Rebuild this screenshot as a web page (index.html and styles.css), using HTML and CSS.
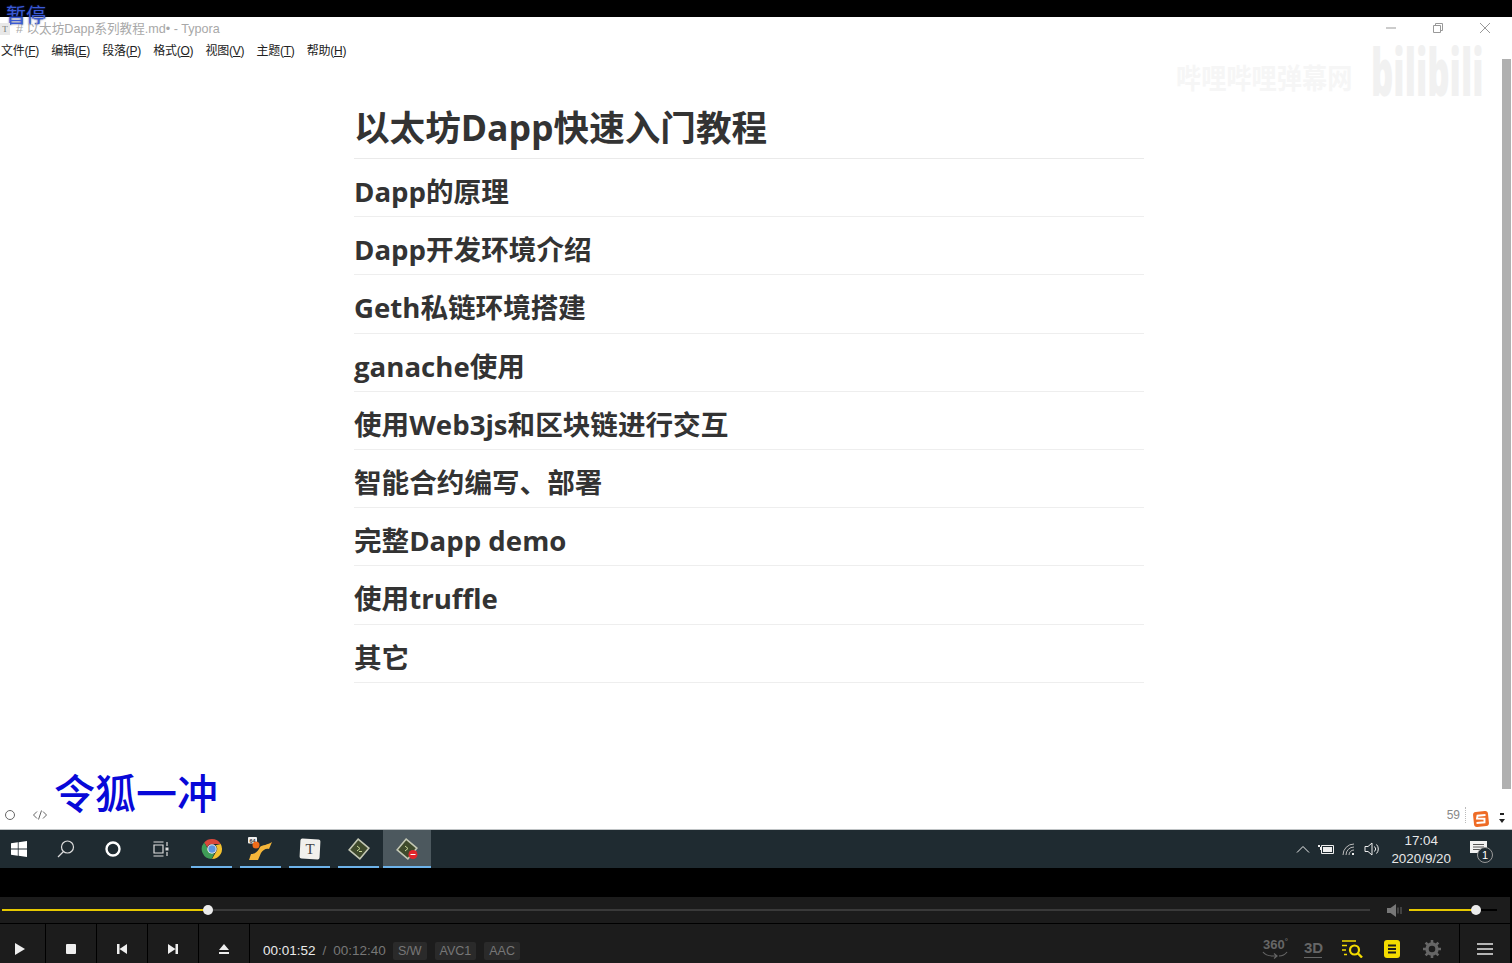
FILE: index.html
```html
<!DOCTYPE html>
<html lang="zh">
<head>
<meta charset="utf-8">
<title>Typora</title>
<link rel="stylesheet" href="styles.css">
</head>
<body>
<div class="screen">
  <div class="topblack"></div>
  <div class="pause">暂停</div>
  <main class="app">
    <header class="titlebar">
      <span class="appicon">T</span>
      <span class="title"># 以太坊Dapp系列教程.md• - Typora</span>
      <div class="winctl">
        <svg width="12" height="12" viewBox="0 0 12 12"><path d="M1 6h10" stroke="#999" fill="none"/></svg>
        <svg width="12" height="12" viewBox="0 0 12 12"><path d="M1.500 3.500h7v7h-7zM3.500 3.500v-2h7v7h-2" stroke="#999" fill="none"/></svg>
        <svg width="12" height="12" viewBox="0 0 12 12"><path d="M1 1l10 10M11 1L1 11" stroke="#999" fill="none"/></svg>
      </div>
    </header>
    <nav class="menubar">
      <span>文件(<u>F</u>)</span><span>编辑(<u>E</u>)</span><span>段落(<u>P</u>)</span><span>格式(<u>O</u>)</span><span>视图(<u>V</u>)</span><span>主题(<u>T</u>)</span><span>帮助(<u>H</u>)</span>
    </nav>
    <div class="docwrap">
      <article class="doc">
        <h1>以太坊Dapp快速入门教程</h1>
        <h2>Dapp的原理</h2>
        <h2>Dapp开发环境介绍</h2>
        <h2>Geth私链环境搭建</h2>
        <h2>ganache使用</h2>
        <h2>使用Web3js和区块链进行交互</h2>
        <h2>智能合约编写、部署</h2>
        <h2>完整Dapp demo</h2>
        <h2>使用truffle</h2>
        <h2>其它</h2>
      </article>
      <div class="scrollbar"><div class="thumb"></div></div>
    </div>
    <footer class="status">
      <svg class="st-circle" width="12" height="12" viewBox="0 0 12 12"><circle cx="6" cy="6" r="4.500" stroke="#666" fill="none"/></svg>
      <svg class="st-code" width="16" height="12" viewBox="0 0 16 12"><path d="M5 2.500L1.500 6 5 9.500M11 2.500L14.500 6 11 9.500M9.500 1.500L6.500 10.500" stroke="#666" fill="none"/></svg>
      <span class="count">59</span>
      <span class="dots"></span>
      <svg class="sogou" width="18" height="18" viewBox="0 0 18 18"><rect x="1.500" y="1.500" width="15" height="15" rx="3" transform="rotate(-6 9 9)" fill="#ee6b25"/><path d="M13.500 5L5.500 5.700 5 8.500 12.500 8.700 12.500 12.300 4.500 13" stroke="#fff" stroke-width="1.900" fill="none"/></svg>
      <svg class="imedots" width="6" height="12" viewBox="0 0 6 12"><path d="M1 1h4v2H1zM0 7h6L3 11z" fill="#222"/></svg>
    </footer>
  </main>
  <div class="wm-name">令狐一冲</div>
  <div class="wm-bili-text">哔哩哔哩弹幕网</div>
  <div class="wm-bili">bilibili</div>

  <div class="taskbar">
    <svg class="tb-start" width="16" height="16" viewBox="0 0 16 16"><path d="M0 2.300l6.800-1v6.200H0zM7.600 1.200L16 0v7.500H7.600zM0 8.400h6.800v6.300L0 13.700zM7.600 8.400H16V16l-8.400-1.200z" fill="#fff"/></svg>
    <svg class="tb-search" width="20" height="20" viewBox="0 0 20 20"><circle cx="11.500" cy="8" r="6" stroke="#ddd" stroke-width="1.200" fill="none"/><path d="M7.500 12.500L2 18" stroke="#ddd" stroke-width="1.200"/></svg>
    <svg class="tb-cortana" width="18" height="18" viewBox="0 0 18 18"><circle cx="9" cy="9" r="6.500" stroke="#fff" stroke-width="2.400" fill="none"/></svg>
    <svg class="tb-tasks" width="18" height="16" viewBox="0 0 18 16"><path d="M1.500 1h10M1.500 15h10M2 4h9v8H2zM15 1v4M15 11v4" stroke="#ddd" stroke-width="1.200" fill="none"/><path d="M13.500 6.500h3v3h-3z" fill="#ddd"/></svg>
    <div class="tb-apps">
      <div class="tb-app">
        <svg width="22" height="22" viewBox="0 0 24 24"><path d="M12 1a11 11 0 0 1 9.500 5.500H12a5.500 5.500 0 0 0-5.200 3.700L3.500 4.800A11 11 0 0 1 12 1z" fill="#d9483b"/><path d="M21.500 6.500A11 11 0 0 1 12 23l4.700-8.200A5.500 5.500 0 0 0 16 8z" fill="#f3c22f"/><path d="M3.500 4.800L8.200 13a5.500 5.500 0 0 0 6.500 3.500L11.500 23A11 11 0 0 1 3.500 4.800z" fill="#3f9d57"/><circle cx="12" cy="12" r="5.200" fill="#eee"/><circle cx="12" cy="12" r="4" fill="#5a95e0"/></svg>
      </div>
      <div class="tb-app">
        <svg width="25" height="24" viewBox="0 0 25 24"><rect x="0" y="0" width="9" height="6.500" rx="1" fill="#eee"/><text x="4.500" y="5.500" text-anchor="middle" class="mini64">64</text><circle cx="8" cy="8" r="3.500" fill="#ef6c1a"/><path d="M24 5L21 12C18 11 15 13 13 16L10 23 1 23 3 17C8 17 10 14 12 10 14 8 20 8 24 5z" fill="#f4b63a"/></svg>
      </div>
      <div class="tb-app">
        <svg width="22" height="22" viewBox="0 0 22 22"><rect x="1" y="1" width="20" height="20" rx="2" transform="rotate(3 11 11)" fill="#f1f0ec"/><text x="11" y="16" text-anchor="middle" class="typora-t">T</text></svg>
      </div>
      <div class="tb-app">
        <svg width="24" height="24" viewBox="0 0 24 24"><rect x="5" y="5" width="14" height="14" transform="rotate(40 12 12)" fill="#3f4a2c" stroke="#c3c7b4" stroke-width="1.600"/><path d="M10 9l3 2.500-3 2.500M12 14.500h3" stroke="#c8d79a" fill="none"/></svg>
      </div>
      <div class="tb-app active">
        <svg width="24" height="24" viewBox="0 0 24 24"><rect x="5" y="5" width="14" height="14" transform="rotate(40 12 12)" fill="#3f4a2c" stroke="#c3c7b4" stroke-width="1.600"/><path d="M10 9l3 2.500-3 2.500" stroke="#c8d79a" fill="none"/><circle cx="18" cy="17.500" r="4.500" fill="#e2262b"/><path d="M15.500 17.500h5" stroke="#fff"/></svg>
      </div>
    </div>
    <div class="tray">
      <svg width="14" height="8" viewBox="0 0 14 8"><path d="M1 7.500l6-6 6 6" stroke="#eee" fill="none"/></svg>
      <svg width="16" height="10" viewBox="0 0 16 10"><path d="M3.500 1.500h12v8h-12z" stroke="#eee" fill="none"/><path d="M5 3h9v5H5zM0 1h2v2H0zM2 3h1v3H2z" fill="#eee"/></svg>
      <svg width="14" height="14" viewBox="0 0 14 14"><path d="M1 13A11 11 0 0 1 12 2M4 13A8 8 0 0 1 12 5M7 13A5 5 0 0 1 12 8" stroke="#bbb" fill="none"/><path d="M10 11h2v2h-2z" fill="#eee"/></svg>
      <svg width="17" height="14" viewBox="0 0 17 14"><path d="M1 4.500h3L8 1v12L4 9.500H1zM10.500 4.500a3.500 3.500 0 0 1 0 5M12.500 2.500a6.500 6.500 0 0 1 0 9" stroke="#eee" fill="none"/></svg>
      <div class="clock"><span>17:04</span><span>2020/9/20</span></div>
      <div class="notify">
        <svg width="18" height="16" viewBox="0 0 18 16"><path d="M0 0h17v12H0z" fill="#f2f2f2"/><path d="M3 3.500h11M3 6h11M3 8.500h7" stroke="#555"/></svg>
        <span class="badge">1</span>
      </div>
    </div>
  </div>
  <div class="blackgap"></div>
  <section class="player">
    <div class="seekrow">
      <div class="seek"><div class="seek-done"></div><div class="knob"></div></div>
      <div class="volume">
        <svg width="15" height="13" viewBox="0 0 15 13"><path d="M0 4h3.500L9 0v13L3.500 9H0z" fill="#777"/><path d="M11 3.500v6M14 3v7" stroke="#666"/></svg>
        <div class="volbar"><div class="vol-done"></div><div class="knob"></div></div>
      </div>
    </div>
    <div class="ctrlrow">
      <button class="btn first"><svg width="12" height="14" viewBox="0 0 12 14"><path d="M1 1l10 6-10 6z" fill="#eee"/></svg></button>
      <button class="btn"><svg width="12" height="12" viewBox="0 0 12 12"><rect x="1" y="1" width="10" height="10" rx="1" fill="#eee"/></svg></button>
      <button class="btn"><svg width="12" height="12" viewBox="0 0 12 12"><path d="M1 1h2.500v10H1zM11 1v10L3.500 6z" fill="#eee"/></svg></button>
      <button class="btn"><svg width="12" height="12" viewBox="0 0 12 12"><path d="M11 1h-2.500v10H11zM1 1v10l7.500-5z" fill="#eee"/></svg></button>
      <button class="btn"><svg width="12" height="12" viewBox="0 0 12 12"><path d="M6 1l5 6H1zM1 9h10v2H1z" fill="#eee"/></svg></button>
      <div class="times">
        <span class="t-now">00:01:52</span><span class="t-sep">/</span><span class="t-all">00:12:40</span>
        <span class="tag">S/W</span><span class="tag">AVC1</span><span class="tag">AAC</span>
      </div>
      <div class="tools">
        <div class="i360"><span>360<sup>°</sup></span><svg width="26" height="8" viewBox="0 0 26 8"><path d="M1 1q3 4 10 4M25 1q-3 4-8 4M9 5h6M12 2.500L15 5l-3 2.500" stroke="#666" stroke-width="1.200" fill="none"/></svg></div>
        <div class="i3d">3D</div>
        <svg class="i-search" width="22" height="18" viewBox="0 0 22 18"><path d="M1 1h14M1 5.500h5M1 10h4M3 14.500h3" stroke="#f4dc00" stroke-width="1.400" fill="none"/><circle cx="13.500" cy="10" r="4.500" stroke="#f4dc00" stroke-width="2.200" fill="none"/><path d="M17 13.500l4 4" stroke="#f4dc00" stroke-width="2.400"/></svg>
        <svg class="i-note" width="16" height="18" viewBox="0 0 16 18"><rect width="16" height="18" rx="3" fill="#f4dc00"/><path d="M4 5.500h8M4 9h8M4 12.500h8" stroke="#1c1c1c" stroke-width="1.800"/></svg>
        <svg class="i-gear" width="18" height="18" viewBox="0 0 18 18"><circle cx="9" cy="9" r="5" stroke="#666" stroke-width="3.400" fill="none"/><path d="M9 0v4M9 14v4M0 9h4M14 9h4M2.600 2.600l2.800 2.800M12.600 12.600l2.800 2.800M15.400 2.600l-2.800 2.800M5.400 12.600l-2.800 2.800" stroke="#666" stroke-width="2.600"/></svg>
        <div class="menubtn"><svg width="16" height="12" viewBox="0 0 16 12"><path d="M0 1h16M0 6h16M0 11h16" stroke="#e6e6e6" stroke-width="1.400"/></svg></div>
      </div>
    </div>
  </section>
</div>
</body>
</html>
```

FILE: styles.css
```css
* { box-sizing: border-box; }
html, body { margin: 0; padding: 0; background: #000; }
body { font-family: "Liberation Sans", "Noto Sans CJK SC", sans-serif; overflow: hidden; }
.screen { position: relative; width: 1512px; height: 963px; display: flex; flex-direction: column; overflow: hidden; background: #000; }
.topblack { height: 17px; flex: none; background: #000; }
.pause { position: absolute; left: 6px; top: 2px; font-size: 20px; line-height: 26px; color: #3a5ad6; font-family: "Noto Sans CJK SC", sans-serif; text-shadow: 0 0 2px #14236e; }

.app { height: 812px; flex: none; background: #fff; display: flex; flex-direction: column; }
.titlebar { height: 23px; flex: none; display: flex; align-items: center; color: #a8a8a8; font-size: 12.6px; position: relative; padding-top: 1px; }
.appicon { width: 10px; height: 12px; margin-right: 6px; background: #e8e8e8; color: #777; font-size: 9px; line-height: 12px; text-align: center; font-family: "Liberation Serif", serif; }
.title { line-height: 23px; white-space: nowrap; }
.winctl { margin-left: auto; display: flex; gap: 35px; padding-right: 21px; align-items: center; margin-top: -2px; }
.menubar { height: 21px; flex: none; display: flex; gap: 12.200px; align-items: flex-start; font-size: 12px; line-height: 16px; padding-top: 3px; color: #222; padding-left: 1px; letter-spacing: -0.25px; }
.menubar span { white-space: nowrap; }
.docwrap { flex: 1; min-height: 0; display: flex; position: relative; }
.doc { width: 790px; margin-left: 354px; padding-top: 39px; color: #333; font-family: "Open Sans", "Noto Sans CJK SC", sans-serif; font-weight: 700; }
h1 { margin: 0; font-size: 35.6px; line-height: 48px; height: 59px; padding-top: 3px; border-bottom: 1px solid #eaeaea; white-space: nowrap; font-weight: 700; }
h2 { margin: 0; font-size: 27.6px; line-height: 38px; height: 58.2px; padding-top: 13px; border-bottom: 1px solid #eee; white-space: nowrap; font-weight: 700; }
.scrollbar { position: absolute; right: 0; top: 0; bottom: 0; width: 10px; display: flex; justify-content: flex-start; }
.thumb { width: 9px; margin-top: -2px; height: 730px; background: #b0b0b0; }
.status { height: 29px; flex: none; display: flex; align-items: center; padding-left: 4px; color: #888; font-size: 12px; background: #fff; }
.st-code { margin-left: 16px; }
.count { margin-left: auto; margin-right: 5px; }
.dots { height: 16px; width: 0; border-left: 1px dotted #bbb; margin-right: 7px; }
.sogou { margin-right: 9px; margin-top: 8px; margin-left: -1px; }
.imedots { margin-right: 7px; margin-top: 7px; }
.wm-name { position: absolute; left: 54px; top: 764px; font-size: 41px; line-height: 54px; color: #0808d8; white-space: nowrap; font-family: "Noto Sans CJK SC", sans-serif; font-weight: 500; }
.wm-bili-text { position: absolute; left: 1176px; top: 61px; font-size: 28px; line-height: 32px; color: #f6f6f6; white-space: nowrap; font-family: "Noto Sans CJK SC", sans-serif; font-weight: 700; transform: scaleX(0.9); transform-origin: 0 0; }
.wm-bili { position: absolute; left: 1371px; top: 30px; font-size: 66px; line-height: 80px; color: #f1f1f1; white-space: nowrap; font-family: "Open Sans", sans-serif; font-weight: 800; transform: scaleX(0.527); transform-origin: 0 0; }

.taskbar { height: 39px; flex: none; background: #1f2b31; border-top: 1px solid #bfc3c5; display: flex; align-items: center; color: #eee; position: relative; }
.tb-start { margin-left: 11px; }
.tb-search { margin-left: 29px; }
.tb-cortana { margin-left: 28px; }
.tb-tasks { margin-left: 30px; }
.tb-apps { display: flex; margin-left: 21px; height: 100%; gap: 8px; }
.tb-app { width: 41px; flex: none; height: 100%; display: flex; align-items: center; justify-content: center; border-bottom: 2px solid #6db3ea; padding-top: 1px; }
.tb-app.active { width: 48px; background: #4c585e; margin-left: -4px; }
.typora-t { font-family: "Liberation Serif", serif; font-size: 15px; fill: #444; }
.mini64 { font-family: "Liberation Sans", sans-serif; font-size: 5.500px; font-weight: 700; fill: #333; }
.tray { margin-left: auto; display: flex; align-items: center; height: 100%; gap: 8px; padding-right: 24px; }
.clock { display: flex; flex-direction: column; align-items: center; font-size: 13.4px; line-height: 18px; margin-left: 2px; padding-top: 2px; color: #e8e8e8; }
.notify { position: relative; margin-left: 11px; width: 18px; height: 16px; }
.notify svg { display: block; }
.badge { position: absolute; left: 7px; top: 6px; width: 16px; height: 16px; border-radius: 50%; background: #1f2b31; border: 1px solid #999; font-size: 11px; line-height: 14px; text-align: center; color: #fff; }
.blackgap { height: 29px; flex: none; background: #000; }

.player { flex: 1; width: 1510px; background: #1c1c1c; display: flex; flex-direction: column; }
.seekrow { height: 27px; flex: none; display: flex; align-items: center; border-bottom: 1px solid #000; }
.seek { margin-left: 2px; width: 1368px; height: 2px; background: #3a3a3a; position: relative; display: flex; align-items: center; }
.seek-done { width: 206px; height: 2px; background: #e6c800; }
.knob { width: 10px; height: 10px; border-radius: 50%; background: #ececec; margin-left: -5px; flex: none; }
.volume { margin-left: 17px; display: flex; align-items: center; gap: 7px; }
.volbar { width: 88px; height: 2px; background: #000; display: flex; align-items: center; }
.vol-done { width: 67px; height: 2px; background: #e6c800; }
.ctrlrow { flex: 1; display: flex; align-items: stretch; }
.btn { width: 51px; flex: none; border: 0; border-right: 1px solid #000; background: none; padding: 11px 0 0; display: flex; align-items: center; justify-content: center; }
.btn.first { width: 46px; padding-right: 5px; padding-left: 0; }
.times { display: flex; align-items: center; padding: 14px 0 0 13px; font-size: 13.5px; font-family: "Liberation Sans", sans-serif; }
.t-now { color: #eaeaea; }
.t-sep { color: #777; margin: 0 7px; }
.t-all { color: #777; margin-right: -1px; }
.tag { color: #777; background: #2a2a2a; border-radius: 2px; height: 18px; line-height: 18px; padding: 0 5px; margin-left: 8px; font-size: 12.5px; }
.tools { margin-left: auto; display: flex; align-items: center; padding-top: 10px; }
.i360 { width: 24px; display: flex; flex-direction: column; align-items: center; color: #666; font-size: 13px; line-height: 13px; font-weight: 700; white-space: nowrap; }
.i360 span { width: 24px; }
.i360 sup { font-size: 8px; line-height: 0; }
.i360 svg { display: block; }
.i3d { margin-left: 17px; width: 18px; color: #666; font-size: 15px; line-height: 16px; border-bottom: 1px solid #666; font-weight: 700; padding-bottom: 1px; white-space: nowrap; }
.i-search { margin-left: 19px; }
.i-note { margin-left: 21px; }
.i-gear { margin-left: 23px; }
.menubtn { align-self: stretch; margin-top: -10px; padding-top: 10px; width: 51px; margin-left: 18px; border-left: 1px solid #000; display: flex; align-items: center; justify-content: center; }
```
